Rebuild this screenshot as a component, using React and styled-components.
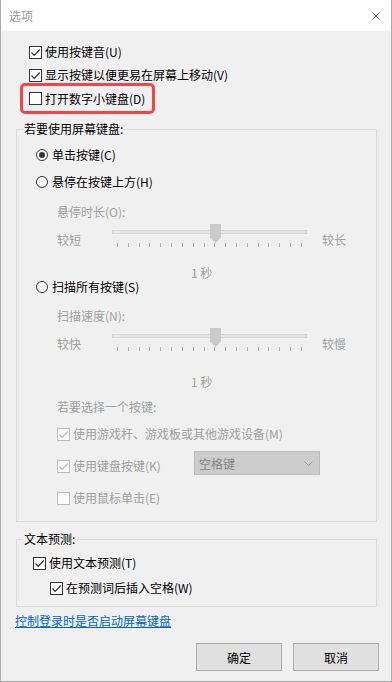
import React from "react";
import styled, { createGlobalStyle } from "styled-components";

const GlobalStyle = createGlobalStyle`
    html, body {
        margin: 0;
        padding: 0;
        background: #f0f0f0;
    }
    * {
        box-sizing: border-box;
    }
`;

const Window = styled.div`
    width: 392px;
    height: 682px;
    background: #f0f0f0;
    border: 1px solid #aaaaaa;
    border-top: none;
    display: flex;
    flex-direction: column;
    font-family: "Noto Sans CJK SC", "Noto Sans", sans-serif;
    font-size: 12px;
    color: #000;
`;

const TitleBar = styled.div`
    height: 31px;
    flex: none;
    background: #fff;
    display: flex;
    align-items: center;
    justify-content: space-between;
    padding: 0 10px 0 8px;
`;

const Title = styled.span`
    color: #999999;
    font-size: 12px;
    line-height: 16px;
`;

const Body = styled.div`
    flex: 1;
    display: flex;
    flex-direction: column;
    padding: 13px 12px 0 14px;
`;

const TopList = styled.div`
    display: flex;
    flex-direction: column;
    padding-left: 14px;
`;

const Row = styled.div`
    display: flex;
    align-items: center;
    height: 16px;
    line-height: 16px;
    gap: ${(p) => (p.$radio ? 4 : 3)}px;
    margin-top: ${(p) => p.$top || 0}px;
    margin-left: ${(p) => p.$indent || 0}px;
    color: ${(p) => (p.$disabled ? "#a0a0a0" : "#000")};
    white-space: nowrap;
`;

const Highlight = styled.div`
    width: 135px;
    height: 31px;
    margin-left: -9px;
    border: 3px solid #f04646;
    border-radius: 5px;
    padding-left: 6px;
    display: flex;
    align-items: center;
`;

const Box = styled.span`
    width: 13px;
    height: 13px;
    flex: none;
    border: 1px solid ${(p) => (p.$disabled ? "#bcbcbc" : "#333333")};
    background: ${(p) => (p.$disabled ? "#fcfcfc" : "#fff")};
    display: inline-flex;
    align-items: center;
    justify-content: center;
`;

const Circle = styled.span`
    width: 12px;
    height: 12px;
    flex: none;
    border: 1px solid #333333;
    border-radius: 50%;
    background: #fff;
    display: inline-flex;
    align-items: center;
    justify-content: center;

    &::after {
        content: "";
        width: 6px;
        height: 6px;
        border-radius: 50%;
        background: ${(p) => (p.$on ? "#333333" : "transparent")};
    }
`;

const Group = styled.fieldset`
    margin: ${(p) => p.$top}px 2px 0 1px;
    padding: 0 0 ${(p) => p.$bottom}px 0;
    border: 1px solid #dcdcdc;
    min-width: 0;
`;

const Legend = styled.legend`
    margin-left: 6px;
    padding: 0 1px;
    line-height: 16px;
    font-size: 12px;
`;

const Caption = styled.div`
    line-height: ${(p) => p.$lh || 16}px;
    height: ${(p) => p.$lh || 16}px;
    margin-top: ${(p) => p.$top || 0}px;
    margin-left: ${(p) => p.$indent || 0}px;
    color: #a0a0a0;
    white-space: nowrap;
`;

const SliderRow = styled.div`
    display: flex;
    align-items: flex-start;
    height: 24px;
    margin-top: ${(p) => p.$top || 0}px;
    margin-left: 40px;
    color: #a0a0a0;
`;

const SideLabel = styled.span`
    width: ${(p) => p.$w || "auto"};
    margin-top: 8px;
    margin-left: ${(p) => p.$ml || 0}px;
    line-height: 16px;
    flex: none;
`;

const TrackArea = styled.div`
    position: relative;
    width: 195px;
    height: 24px;
    flex: none;
`;

const Track = styled.div`
    margin-top: 6px;
    height: 4px;
    background: #e7e7e7;
    border: 1px solid #d6d6d6;
`;

const Thumb = styled.svg`
    position: absolute;
    left: 98px;
    top: 0;
`;

const Ticks = styled.div`
    display: flex;
    justify-content: space-between;
    padding: 0 5px;
    margin-top: 9px;
`;

const Tick = styled.span`
    width: 1px;
    height: 4px;
    background: #b0b0b0;
`;

const KeyRow = styled.div`
    display: grid;
    grid-template-columns: 137px 126px;
    align-items: start;
    margin-top: 9px;
    margin-left: 40px;
`;

const Dropdown = styled.div`
    height: 24px;
    border: 1px solid #bcbcbc;
    background: #cccccc;
    color: #838383;
    display: flex;
    align-items: center;
    justify-content: space-between;
    padding: 0 6px 0 4px;
`;

const Link = styled.a`
    margin-top: 6px;
    line-height: 16px;
    color: #0066cc;
    text-decoration: underline;
    align-self: flex-start;
    cursor: pointer;
`;

const Buttons = styled.div`
    display: flex;
    justify-content: flex-end;
    gap: 11px;
    margin-top: 14px;
`;

const Button = styled.button`
    width: 86px;
    height: 28px;
    background: #e1e1e1;
    border: 1px solid #adadad;
    font-family: inherit;
    font-size: 12px;
    color: #000;
    padding: 0;
`;

const Check = ({ checked, disabled }) => (
    <Box $disabled={disabled}>
        {checked && (
            <svg width="11" height="11" viewBox="0 0 11 11">
                <path
                    d="M1.5 5.5 L4.2 8.3 L9.8 2.5"
                    fill="none"
                    stroke={disabled ? "#bcbcbc" : "#333"}
                    strokeWidth="1.2"
                />
            </svg>
        )}
    </Box>
);

const CheckRow = ({ checked, disabled, top, indent, children }) => (
    <Row $top={top} $indent={indent} $disabled={disabled}>
        <Check checked={checked} disabled={disabled} />
        <span>{children}</span>
    </Row>
);

const RadioRow = ({ on, top, children }) => (
    <Row $radio $top={top} $indent={19}>
        <Circle $on={on} />
        <span>{children}</span>
    </Row>
);

const Slider = ({ top, left, right }) => (
    <SliderRow $top={top}>
        <SideLabel $w="55px">{left}</SideLabel>
        <TrackArea>
            <Track />
            <Thumb width="11" height="19" viewBox="0 0 11 19">
                <path d="M0 0 H11 V13.5 L5.5 19 L0 13.5 Z" fill="#cbcbcb" />
            </Thumb>
            <Ticks>
                {Array.from({ length: 18 }).map((_, i) => (
                    <Tick key={i} />
                ))}
            </Ticks>
        </TrackArea>
        <SideLabel $ml={15}>{right}</SideLabel>
    </SliderRow>
);

const App = () => {
    return (
        <>
            <GlobalStyle />
            <Window>
                <TitleBar>
                    <Title>选项</Title>
                    <svg width="10" height="10" viewBox="0 0 10 10">
                        <path d="M0.5 0.5 L9.5 9.5 M9.5 0.5 L0.5 9.5" stroke="#7a7a7a" strokeWidth="1" />
                    </svg>
                </TitleBar>
                <Body>
                    <TopList>
                        <CheckRow checked>使用按键音(U)</CheckRow>
                        <CheckRow checked top={7}>显示按键以便更易在屏幕上移动(V)</CheckRow>
                        <Highlight>
                            <CheckRow>打开数字小键盘(D)</CheckRow>
                        </Highlight>
                    </TopList>

                    <Group $top={7} $bottom={15}>
                        <Legend>若要使用屏幕键盘:</Legend>
                        <RadioRow on top={10}>单击按键(C)</RadioRow>
                        <RadioRow top={11}>悬停在按键上方(H)</RadioRow>
                        <Caption $top={14} $indent={40}>悬停时长(O):</Caption>
                        <Slider top={4} left="较短" right="较长" />
                        <Caption $top={19} $indent={174} $lh={12}>1 秒</Caption>
                        <RadioRow top={0}>扫描所有按键(S)</RadioRow>
                        <Caption $top={13} $indent={40}>扫描速度(N):</Caption>
                        <Slider top={4} left="较快" right="较慢" />
                        <Caption $top={24} $indent={174} $lh={12}>1 秒</Caption>
                        <Caption $top={11} $indent={40}>若要选择一个按键:</Caption>
                        <CheckRow checked disabled top={11} indent={40}>
                            使用游戏杆、游戏板或其他游戏设备(M)
                        </CheckRow>
                        <KeyRow>
                            <CheckRow checked disabled top={7}>使用键盘按键(K)</CheckRow>
                            <Dropdown>
                                <span>空格键</span>
                                <svg width="9" height="5" viewBox="0 0 9 5">
                                    <path d="M0.5 0.5 L4.5 4.5 L8.5 0.5" fill="none" stroke="#a0a0a0" />
                                </svg>
                            </Dropdown>
                        </KeyRow>
                        <CheckRow disabled top={15} indent={40}>使用鼠标单击(E)</CheckRow>
                    </Group>

                    <Group $top={9} $bottom={10}>
                        <Legend>文本预测:</Legend>
                        <CheckRow checked top={8} indent={16}>使用文本预测(T)</CheckRow>
                        <CheckRow checked top={9} indent={33}>在预测词后插入空格(W)</CheckRow>
                    </Group>

                    <Link>控制登录时是否启动屏幕键盘</Link>

                    <Buttons>
                        <Button>确定</Button>
                        <Button>取消</Button>
                    </Buttons>
                </Body>
            </Window>
        </>
    );
};

export default App;
